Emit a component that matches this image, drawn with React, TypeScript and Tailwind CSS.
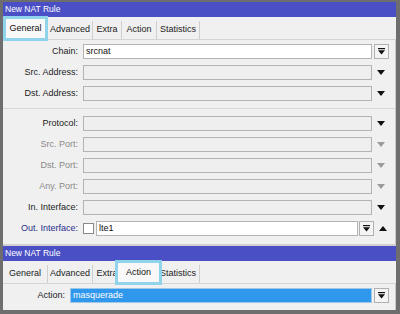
import React from "react";

const font = { fontFamily: '"Liberation Sans", Arial, sans-serif' };

function Arrow({ dim = false, up = false }: { dim?: boolean; up?: boolean }) {
  return (
    <div className="w-[18px] h-[15px] flex items-center justify-center">
      <svg width="8" height="5" viewBox="0 0 8 5">
        <path
          d={up ? "M0 5 L8 5 L4 0 Z" : "M0 0 L8 0 L4 5 Z"}
          fill={dim ? "#9a9a9a" : "#111"}
        />
      </svg>
    </div>
  );
}

function DropBtn() {
  return (
    <div className="w-[15px] h-[15px] border border-[#b0b0b0] bg-[#f4f4f4] flex items-center justify-center">
      <svg width="7" height="7" viewBox="0 0 7 7">
        <rect x="0" y="0" width="7" height="1.2" fill="#111" />
        <path d="M0 2.2 L7 2.2 L3.5 6.5 Z" fill="#111" />
      </svg>
    </div>
  );
}

function Row({
  label,
  tone = "text-[#1c1c1c]",
  children,
}: {
  label: string;
  tone?: string;
  children: React.ReactNode;
}) {
  return (
    <div className="flex items-center h-[15px]">
      <div className={`w-[80px] pr-[5px] text-right text-[9px] ${tone}`}>{label}</div>
      {children}
    </div>
  );
}

function EmptyField({ dim = false }: { dim?: boolean }) {
  return (
    <>
      <div className="w-[289px] h-[15px] border border-[#b4b4b4] bg-[#efefef]" />
      <Arrow dim={dim} />
    </>
  );
}

const tabs = [
  { name: "General", w: "w-[45px]" },
  { name: "Advanced", w: "w-[45px]" },
  { name: "Extra", w: "w-[29px]" },
  { name: "Action", w: "w-[35px]" },
  { name: "Statistics", w: "w-[43px]" },
];

function Tabs({ highlight }: { highlight: string }) {
  return (
    <div className="relative flex items-end h-[23px] bg-[#f0f0f0] border-b border-[#d4d4d4]">
      {tabs.map((t) => (
        <div
          key={t.name}
          className={`${t.w} h-[18px] flex items-center justify-center border-r border-[#cfcfcf] text-[9px] text-[#222]`}
        >
          {t.name}
        </div>
      ))}
      <div
        className={`absolute -top-[1px] h-[25px] border-[3px] border-[#8fd4ea] bg-[#f8f8f8] flex items-center justify-center text-[9px] text-[#111] ${highlight}`}
      >
        {highlight.includes("left-0") ? "General" : "Action"}
      </div>
    </div>
  );
}

function Title() {
  return (
    <div className="h-[15px] bg-[#4a4fc6] text-white text-[8.5px] flex items-center pl-[2px]">
      New NAT Rule
    </div>
  );
}

export default function App() {
  return (
    <div
      className="w-[400px] h-[314px] bg-[#6e6e6e] pt-[2px] pl-[3px] pr-[4px] pb-[4px] flex flex-col"
      style={font}
    >
      <Title />
      <Tabs highlight="left-0 w-[45px]" />
      <div className="bg-[#f0f0f0] border-r border-[#c8c8c8] flex flex-col pt-[4px]">
        <div className="flex flex-col gap-[6px]">
          <Row label="Chain:">
            <div className="w-[289px] h-[15px] border border-[#b4b4b4] bg-white text-[9px] text-[#111] pl-[2px] flex items-center">
              srcnat
            </div>
            <div className="pl-[2px]">
              <DropBtn />
            </div>
          </Row>
          <Row label="Src. Address:">
            <EmptyField />
          </Row>
          <Row label="Dst. Address:">
            <EmptyField />
          </Row>
        </div>
        <div className="my-[7px] border-t border-[#d8d8d8]" />
        <div className="flex flex-col gap-[6px] pb-[8px]">
          <Row label="Protocol:">
            <EmptyField />
          </Row>
          <Row label="Src. Port:" tone="text-[#8a8a8a]">
            <EmptyField dim />
          </Row>
          <Row label="Dst. Port:" tone="text-[#8a8a8a]">
            <EmptyField dim />
          </Row>
          <Row label="Any. Port:" tone="text-[#8a8a8a]">
            <EmptyField dim />
          </Row>
          <Row label="In. Interface:">
            <EmptyField />
          </Row>
          <Row label="Out. Interface:" tone="text-[#2a2e8c]">
            <div className="w-[11px] h-[11px] border border-[#8a8a8a] bg-white mr-[2px]" />
            <div className="w-[262px] h-[15px] border border-[#b4b4b4] bg-white text-[9px] text-[#111] pl-[2px] flex items-center">
              lte1
            </div>
            <div className="pl-[1px]">
              <DropBtn />
            </div>
            <Arrow up />
          </Row>
        </div>
      </div>
      <div className="h-[2px] bg-[#d0d0d0]" />
      <Title />
      <Tabs highlight="left-[112px] w-[47px]" />
      <div className="flex-1 bg-[#f0f0f0] border-r border-[#c8c8c8] pt-[4px]">
        <div className="flex items-center h-[15px]">
          <div className="w-[67px] pr-[5px] text-right text-[9px] text-[#1c1c1c]">Action:</div>
          <div className="w-[302px] h-[15px] border border-[#9ec7e8] bg-[#2f97ec] text-[9px] text-white pl-[2px] flex items-center">
            masquerade
          </div>
          <div className="pl-[2px]">
            <DropBtn />
          </div>
        </div>
      </div>
    </div>
  );
}
